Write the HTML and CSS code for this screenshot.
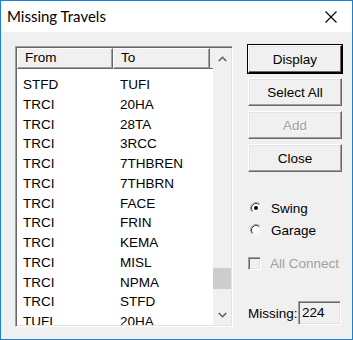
FILE: index.html
```html
<!DOCTYPE html>
<html>
<head>
<meta charset="utf-8">
<link rel="stylesheet" href="styles.css">
</head>
<body>
<div class="window">
  <div class="titlebar">
    <span class="title">Missing Travels</span>
    <svg class="close" width="12" height="12" viewBox="0 0 12 12"><path d="M0.5 0.5L11.5 11.5M11.5 0.5L0.5 11.5" stroke="#000" stroke-width="1.1" fill="none"/></svg>
  </div>
  <div class="client">
    <div class="listview">
      <div class="lv-main">
        <div class="lv-header">
          <div class="hcol from">From</div>
          <div class="hcol to">To</div>
          <div class="hrest"></div>
        </div>
        <div class="lv-rows">
          <div class="row"><span class="c1">STFD</span><span class="c2">TUFI</span></div>
          <div class="row"><span class="c1">TRCI</span><span class="c2">20HA</span></div>
          <div class="row"><span class="c1">TRCI</span><span class="c2">28TA</span></div>
          <div class="row"><span class="c1">TRCI</span><span class="c2">3RCC</span></div>
          <div class="row"><span class="c1">TRCI</span><span class="c2">7THBREN</span></div>
          <div class="row"><span class="c1">TRCI</span><span class="c2">7THBRN</span></div>
          <div class="row"><span class="c1">TRCI</span><span class="c2">FACE</span></div>
          <div class="row"><span class="c1">TRCI</span><span class="c2">FRIN</span></div>
          <div class="row"><span class="c1">TRCI</span><span class="c2">KEMA</span></div>
          <div class="row"><span class="c1">TRCI</span><span class="c2">MISL</span></div>
          <div class="row"><span class="c1">TRCI</span><span class="c2">NPMA</span></div>
          <div class="row"><span class="c1">TRCI</span><span class="c2">STFD</span></div>
          <div class="row"><span class="c1">TUFI</span><span class="c2">20HA</span></div>
        </div>
      </div>
      <div class="scrollbar">
        <div class="sb-btn">
          <svg width="9" height="6" viewBox="0 0 9 6"><path d="M0.8 5L4.5 1.3L8.2 5" stroke="#606060" stroke-width="1.6" fill="none"/></svg>
        </div>
        <div class="sb-track"><div class="sb-thumb" style="margin-top:199px"></div></div>
        <div class="sb-btn">
          <svg width="9" height="6" viewBox="0 0 9 6"><path d="M0.8 1L4.5 4.7L8.2 1" stroke="#606060" stroke-width="1.6" fill="none"/></svg>
        </div>
      </div>
    </div>
    <div class="side">
      <div class="btn default"><span>Display</span></div>
      <div class="btn"><span>Select All</span></div>
      <div class="btn disabled"><span>Add</span></div>
      <div class="btn"><span>Close</span></div>

      <div class="radio first">
        <svg class="rb" width="12" height="12" viewBox="0 0 12 12">
          <circle cx="6" cy="6" r="5" fill="#fff"/>
          <path d="M2.11 9.89A5.5 5.5 0 0 1 9.89 2.11" stroke="#a0a0a0" fill="none"/>
          <path d="M9.89 2.11A5.5 5.5 0 0 1 2.11 9.89" stroke="#fff" fill="none"/>
          <path d="M2.82 9.18A4.5 4.5 0 0 1 9.18 2.82" stroke="#404040" fill="none"/>
          <path d="M9.18 2.82A4.5 4.5 0 0 1 2.82 9.18" stroke="#e3e3e3" fill="none"/>
          <circle cx="6" cy="6" r="2" fill="#000"/>
        </svg>
        <span>Swing</span>
      </div>
      <div class="radio">
        <svg class="rb" width="12" height="12" viewBox="0 0 12 12">
          <circle cx="6" cy="6" r="5" fill="#fff"/>
          <path d="M2.11 9.89A5.5 5.5 0 0 1 9.89 2.11" stroke="#a0a0a0" fill="none"/>
          <path d="M9.89 2.11A5.5 5.5 0 0 1 2.11 9.89" stroke="#fff" fill="none"/>
          <path d="M2.82 9.18A4.5 4.5 0 0 1 9.18 2.82" stroke="#404040" fill="none"/>
          <path d="M9.18 2.82A4.5 4.5 0 0 1 2.82 9.18" stroke="#e3e3e3" fill="none"/>
        </svg>
        <span>Garage</span>
      </div>
      <div class="check">
        <span class="cb"></span>
        <span>All Connect</span>
      </div>
      <div class="missing">
        <span>Missing:</span>
        <span class="edit">224</span>
      </div>
    </div>
  </div>
</div>
</body>
</html>
```

FILE: styles.css
```css
html, body {
  margin: 0;
  padding: 0;
  background: #f0f0f0;
}
.window {
  width: 353px;
  height: 340px;
  box-sizing: border-box;
  border: 1px solid #1a82d4;
  background: #f0f0f0;
  display: flex;
  flex-direction: column;
  overflow: hidden;
  font-family: "Liberation Sans", Arial, sans-serif;
  font-size: 13.5px;
  color: #000;
}
.titlebar {
  height: 31px;
  flex: none;
  background: #fff;
  display: flex;
  align-items: center;
  justify-content: space-between;
  padding: 0 15px 0 6px;
}
.title {
  font-family: Lato, "Noto Sans", sans-serif;
  font-size: 15px;
  margin-top: -1px;
}
.close {
  display: block;
  margin-top: 1px;
}
.client {
  flex: 1;
  display: flex;
  align-items: flex-start;
  padding: 14px 0 0 14px;
  gap: 15px;
}
.listview {
  width: 218px;
  height: 281px;
  box-sizing: border-box;
  border: 1px solid;
  border-color: #a0a0a0 #fff #fff #a0a0a0;
  box-shadow: inset 1px 1px #696969, inset -1px -1px #e3e3e3;
  padding: 1px;
  background: #fff;
  display: flex;
  overflow: hidden;
}
.lv-main {
  flex: 1;
  min-width: 0;
  overflow: hidden;
}
.lv-header {
  display: flex;
  height: 21px;
}
.hcol {
  box-sizing: border-box;
  background: #f0f0f0;
  border-top: 1px solid #fff;
  border-left: 1px solid #fff;
  border-right: 1px solid #696969;
  border-bottom: 1px solid #696969;
  box-shadow: inset -1px -1px #a0a0a0;
  line-height: 18px;
  white-space: nowrap;
}
.hcol.from {
  width: 96px;
  padding-left: 7px;
}
.hcol.to {
  width: 97px;
  padding-left: 7px;
}
.hrest {
  flex: 1;
  background: #f0f0f0;
  border-bottom: 1px solid #696969;
  box-sizing: border-box;
}
.lv-rows {
  padding-top: 6px;
}
.row {
  display: flex;
  height: 19.75px;
  line-height: 19.75px;
  white-space: nowrap;
}
.c1 {
  width: 96px;
  padding-left: 6px;
  box-sizing: border-box;
}
.c2 {
  padding-left: 7px;
}
.scrollbar {
  width: 18px;
  flex: none;
  background: #f0f0f0;
  display: flex;
  flex-direction: column;
}
.sb-btn {
  height: 21px;
  display: flex;
  align-items: center;
  justify-content: center;
  flex: none;
}
.sb-btn svg { display: block; }
.sb-track {
  flex: 1;
  display: flex;
  flex-direction: column;
  align-items: center;
}
.sb-thumb {
  width: 18px;
  height: 21px;
  background: #cdcdcd;
}
.side {
  width: 94px;
  display: flex;
  flex-direction: column;
  margin-top: -1px;
}
.btn {
  height: 28px;
  box-sizing: border-box;
  border: 1px solid;
  border-color: #fff #696969 #696969 #fff;
  box-shadow: inset -1px -1px #a0a0a0, inset 1px 1px #e3e3e3;
  background: #f0f0f0;
  display: flex;
  align-items: center;
  justify-content: center;
  margin-bottom: 5px;
  white-space: nowrap;
}
.btn.default {
  outline: 1px solid #000;
  outline-offset: 0;
  border-color: #fff #000 #000 #fff;
  box-shadow: inset -1px -1px #696969, inset 1px 1px #e3e3e3;
}
.btn.disabled span {
  color: #a0a0a0;
  text-shadow: 1px 1px #fff;
}
.radio {
  display: flex;
  align-items: center;
  height: 20px;
  margin-bottom: 2px;
  padding-left: 2px;
}
.radio.first {
  margin-top: 21px;
}
.rb {
  display: block;
  margin-right: 9px;
  flex: none;
}
.check {
  display: flex;
  align-items: center;
  height: 20px;
  margin-top: 11px;
  color: #a0a0a0;
}
.cb {
  width: 13px;
  height: 13px;
  box-sizing: border-box;
  border: 1px solid;
  border-color: #a0a0a0 #fff #fff #a0a0a0;
  box-shadow: inset 1px 1px #696969, inset -1px -1px #e3e3e3;
  background: #f0f0f0;
  margin-right: 9px;
  flex: none;
}
.missing {
  display: flex;
  align-items: center;
  justify-content: space-between;
  margin-top: 28px;
  height: 24px;
  padding-right: 1px;
}
.edit {
  width: 43px;
  height: 24px;
  box-sizing: border-box;
  border: 1px solid;
  border-color: #a0a0a0 #fff #fff #a0a0a0;
  box-shadow: inset 1px 1px #696969, inset -1px -1px #e3e3e3;
  padding-left: 3px;
  line-height: 22px;
  background: #f0f0f0;
}
```
